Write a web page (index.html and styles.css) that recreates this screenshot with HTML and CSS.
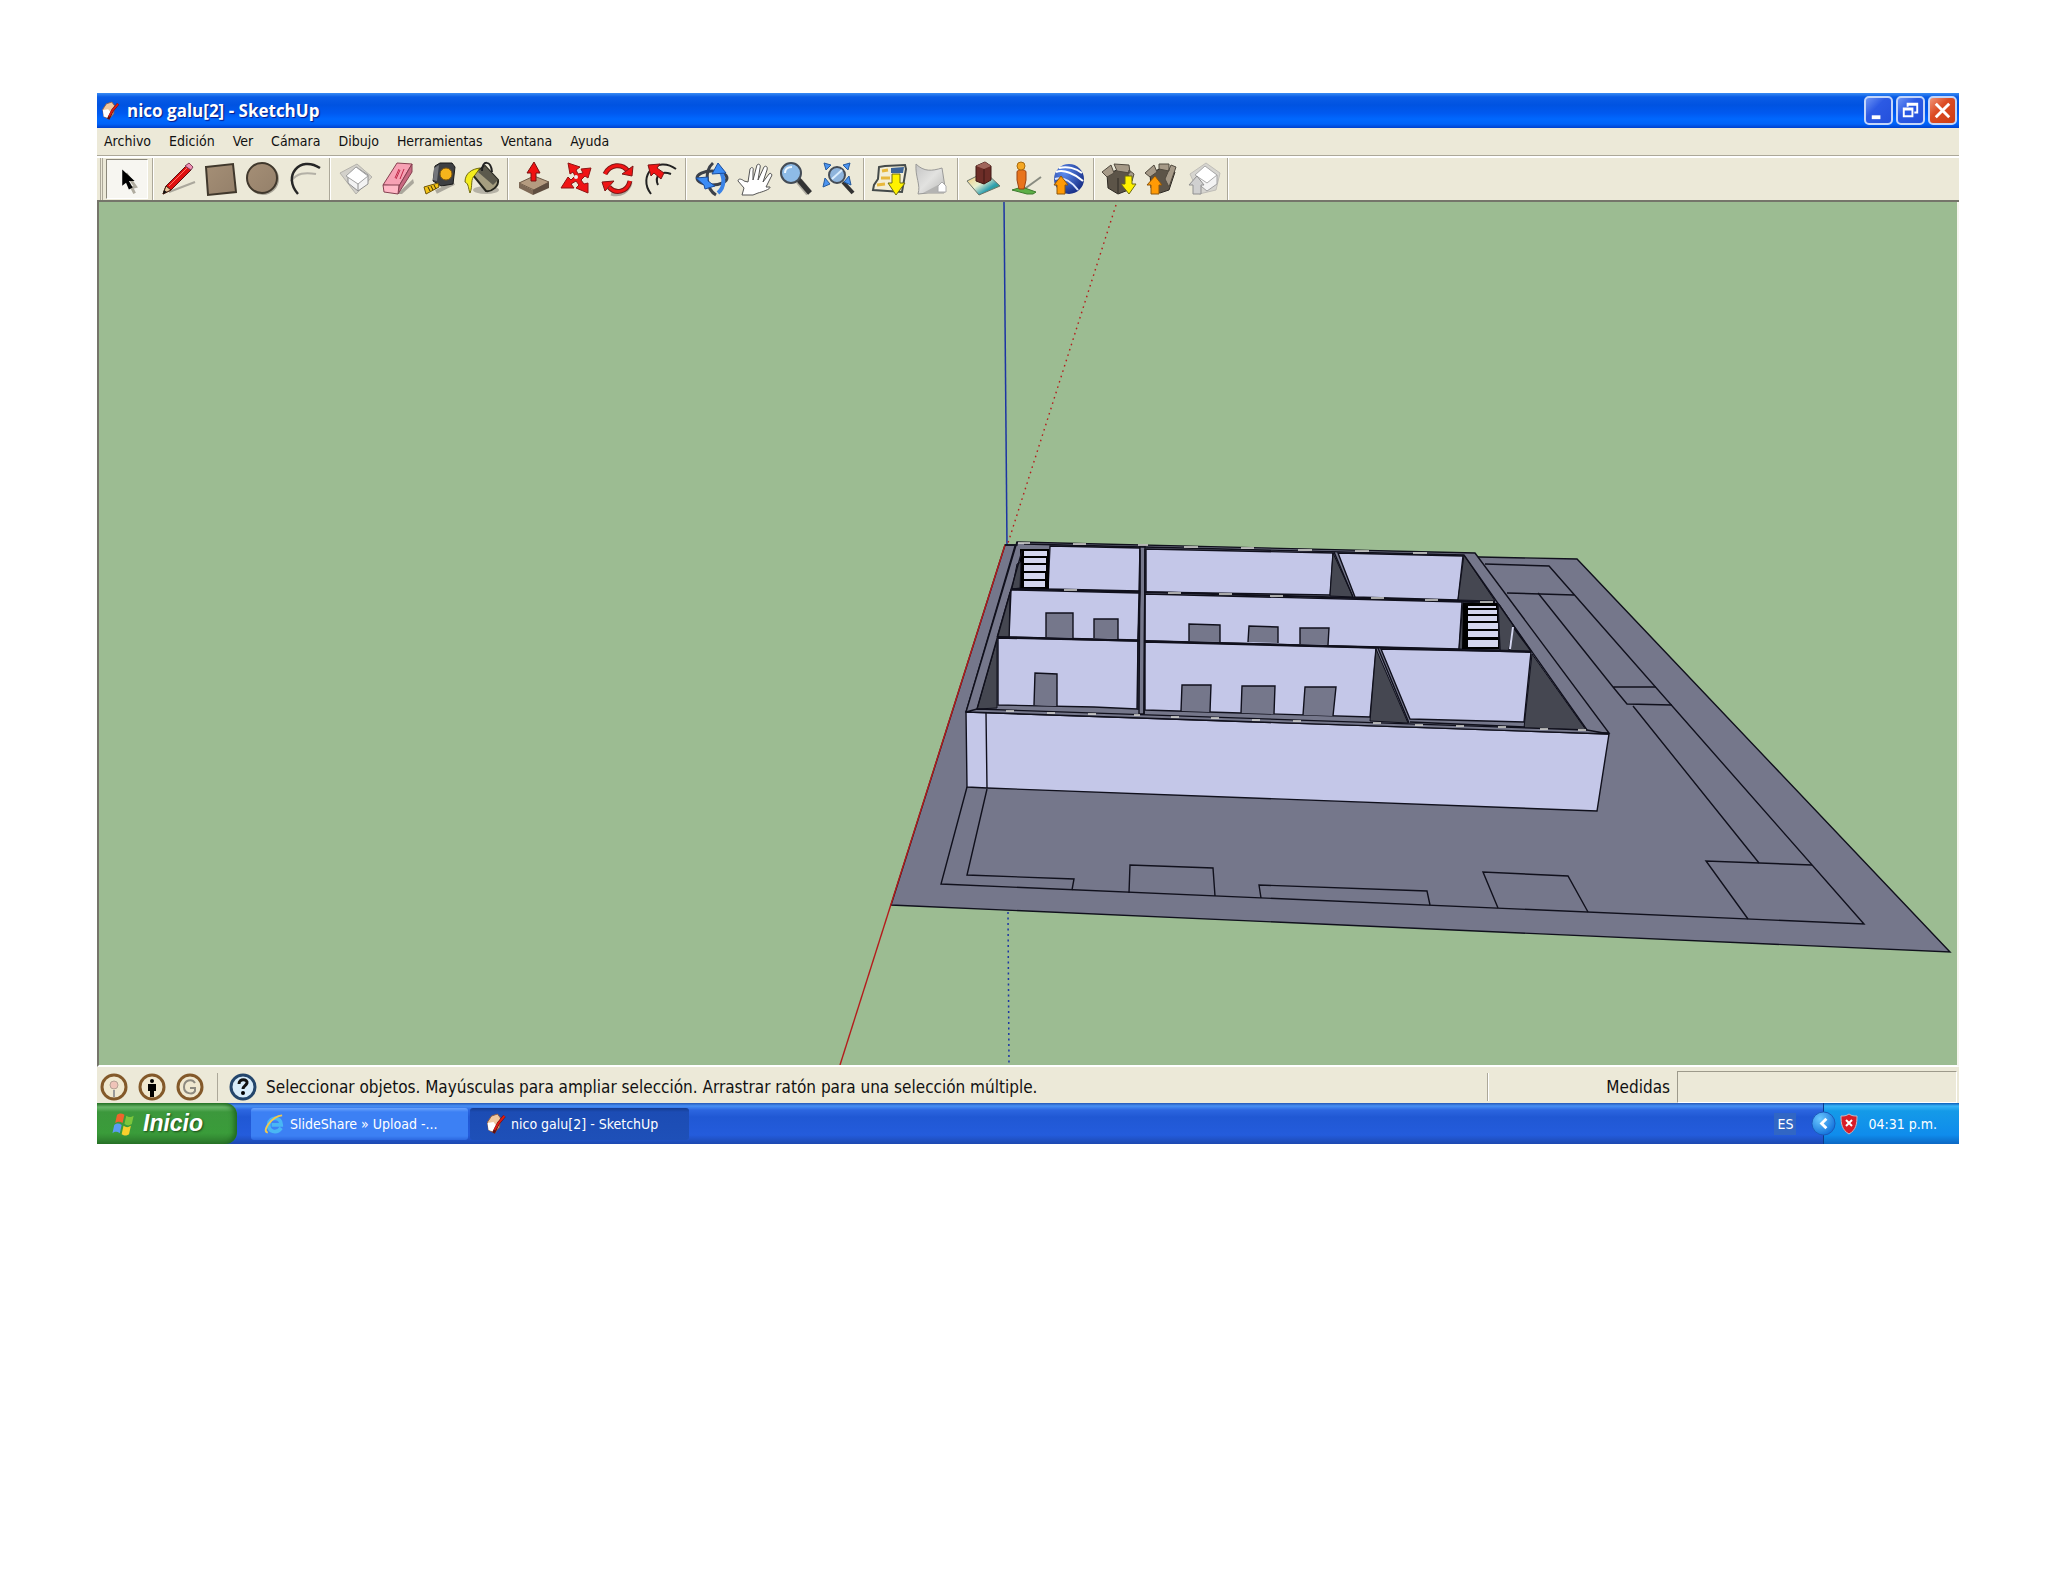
FILE: index.html
```
<!DOCTYPE html>
<html lang="es">
<head>
  <title>nico galu[2] - SketchUp</title>
  <meta charset="utf-8">
  <meta name="viewport" content="width=device-width, initial-scale=1">
  <link rel="stylesheet" href="styles.css">
</head>
<body>
  <svg class="defs" aria-hidden="true">
    <defs>
      <symbol id="app-icon" viewBox="0 0 20 22">
        <path d="m2 9 4-6 6-2 3 4-1 9-5 6-6-3z" fill="#f0c8a0" stroke="#8c5c48"/>
        <path d="m2 10 6-1 3 4-2 6-6-2z" fill="#fff"/>
        <path d="m19 3-6 7-5 10" fill="none" stroke="#601010" stroke-width="3"/>
        <path d="m19 3-6 7-4 7" fill="none" stroke="#dc1c14" stroke-width="2"/>
      </symbol>
      <linearGradient id="tan" x1="0" y1="0" x2="1" y2="1">
        <stop offset="0" stop-color="#a58f76"/>
        <stop offset="1" stop-color="#94806a"/>
      </linearGradient>
      <linearGradient id="land" x1="0" y1="0" x2="1" y2="1">
        <stop offset="0" stop-color="#f6c66a"/>
        <stop offset=".45" stop-color="#e8efd0"/>
        <stop offset=".7" stop-color="#2d9fb0"/>
        <stop offset="1" stop-color="#3f9c38"/>
      </linearGradient>
      <linearGradient id="terrain" x1="0" y1="0" x2="1" y2="1">
        <stop offset="0" stop-color="#c4c4c4"/>
        <stop offset=".5" stop-color="#e2e2e0"/>
        <stop offset="1" stop-color="#b8b8b6"/>
      </linearGradient>
      <radialGradient id="globe" cx=".35" cy=".3" r=".8">
        <stop offset="0" stop-color="#5c8cf0"/>
        <stop offset="1" stop-color="#12277e"/>
      </radialGradient>
      <radialGradient id="blue-ball" cx=".35" cy=".3" r=".8">
        <stop offset="0" stop-color="#6cc8ff"/>
        <stop offset="1" stop-color="#0a6ad8"/>
      </radialGradient>
    </defs>
  </svg>

  <main class="window">
    <header class="titlebar">
      <svg class="app-icon"><use href="#app-icon"/></svg>
      <h1 class="title">nico galu[2] - SketchUp</h1>
      <div class="window-controls">
        <button class="control" type="button" aria-label="Minimizar">
          <svg viewBox="0 0 26 26"><path d="M6 18h9v4H6z" fill="#fff"/></svg>
        </button>
        <button class="control" type="button" aria-label="Restaurar">
          <svg viewBox="0 0 26 26"><path d="M10 9V6h10v9h-3M10 7h10" fill="none" stroke="#fff" stroke-width="2"/><path d="M6 11h9v8H6zM6 12h9" fill="none" stroke="#fff" stroke-width="2"/></svg>
        </button>
        <button class="control control-close" type="button" aria-label="Cerrar">
          <svg viewBox="0 0 26 26"><path d="m6 6 14 14M20 6 6 20" stroke="#fff" stroke-width="3"/></svg>
        </button>
      </div>
    </header>

    <nav class="menu">
      <button type="button">Archivo</button>
      <button type="button">Edición</button>
      <button type="button">Ver</button>
      <button type="button">Cámara</button>
      <button type="button">Dibujo</button>
      <button type="button">Herramientas</button>
      <button type="button">Ventana</button>
      <button type="button">Ayuda</button>
    </nav>

    <div class="toolbar">
      <div class="tools tools-select">
        <button class="active" type="button" aria-label="Seleccionar">
          <svg viewBox="0 0 42 40"><path d="m20 14 10 14-4 1 3 6" fill="none" stroke="#b0aca0" stroke-width="3"/><path d="M16 10v17l4-3 3 7 4-2-4-7h6z"/></svg>
        </button>
      </div>
      <div class="tools">
        <button type="button" aria-label="Línea">
          <svg viewBox="0 0 42 40"><path d="m12 33 26-10" stroke="#aaa79c" stroke-width="2"/><path d="M6 35 9 27 29 7l5 4-20 20z" fill="#e01010" stroke="#5a1010"/><path d="m6 35 3-8 5 4z" fill="#e9c79c" stroke="#402010"/><path d="m6 35 1-4 3 2z" fill="#111"/><path d="m28 7 4-3 4 4-2 3z" fill="#f090b4" stroke="#804058"/><path d="m12 27 18-18" stroke="#ff7464"/></svg>
        </button>
        <button type="button" aria-label="Rectángulo">
          <svg viewBox="0 0 42 40"><path d="m7 8 27-3 3 28-28 3z" fill="url(#tan)" stroke="#40382c" stroke-width="2"/></svg>
        </button>
        <button type="button" aria-label="Círculo">
          <svg viewBox="0 0 42 40"><circle cx="22" cy="20" r="15" fill="none" stroke="#a9a598" stroke-width="2"/><circle cx="21" cy="19" r="15" fill="url(#tan)" stroke="#40382c" stroke-width="2"/></svg>
        </button>
        <button type="button" aria-label="Arco">
          <svg viewBox="0 0 42 40"><path d="M8 22c6-8 14-9 25-7" fill="none" stroke="#b3b0a6" stroke-width="2"/><path d="M15 35C-1 17 17-4 37 9" fill="none" stroke="#262626" stroke-width="2.5"/></svg>
        </button>
      </div>
      <div class="tools">
        <button type="button" aria-label="Crear componente">
          <svg viewBox="0 0 42 40"><path d="m5 14 17-9 15 13-16 17z" fill="#d3d1cb" stroke="#b4b2ab"/><path d="m13 16 8-8 12 8v9l-10 7-10-8z" fill="#f3f3f3" stroke="#8e8e8e"/><path d="m11 17 10-9 12 9-10 8z" fill="#fff" stroke="#a0a0a0"/><path d="M23 25v7" stroke="#8e8e8e"/></svg>
        </button>
        <button type="button" aria-label="Borrar">
          <svg viewBox="0 0 42 40"><path d="m20 35 16-15 1 4-12 11z" fill="#aaa79c"/><path d="m6 26 14-22 15 1-13 22z" fill="#f7a1b4" stroke="#854050"/><path d="m35 5 0 8-14 22 1-8z" fill="#c86880" stroke="#854050"/><path d="M6 26h16l-1 9-14-2z" fill="#ffb8c6" stroke="#854050"/><path d="m18 19 4-9m1 1-4 9m4 0 4-10" stroke="#c02848" fill="none"/></svg>
        </button>
        <button type="button" aria-label="Medir">
          <svg viewBox="0 0 42 40"><path d="m17 33 18-9" stroke="#aaa79c" stroke-width="4"/><path d="m16 7 5-3h12l3 4-2 17-12 2-8-5z" fill="#3d3f42" stroke="#191919"/><path d="m15 9 5-3-2 16-4-1z" fill="#74767a"/><circle cx="27" cy="15" r="6" fill="#f6b41c" stroke="#80580c"/><path d="m5 28 14-4 1 4-13 7z" fill="#f2c216" stroke="#6d5306"/><path d="m9 28 2 4m1-5 2 4m1-5 2 4" stroke="#3b2e08"/></svg>
        </button>
        <button type="button" aria-label="Pintar">
          <svg viewBox="0 0 42 40"><ellipse cx="25" cy="31" rx="13" ry="4" fill="#b5b2a6"/><path d="M11 15 24 7l13 14c1 6-6 12-12 11z" fill="#a59e80" stroke="#26261e" stroke-width="2"/><path d="m24 7 13 14-5 5-15-13z" fill="#5b594c"/><path d="M21 12c0-11 9-11 10 1" fill="none" stroke="#222" stroke-width="2"/><path d="M4 23c0-9 7-13 15-14l-5 7c-5 4-2 11-5 18-2-5-1-9-5-11z" fill="#f4ec1e" stroke="#6e6810"/></svg>
        </button>
      </div>
      <div class="tools">
        <button type="button" aria-label="Empujar o tirar">
          <svg viewBox="0 0 42 40"><path d="m6 24 15-7 15 6-15 8z" fill="#b49b80" stroke="#6f5a47"/><path d="M6 24v5l14 7v-5z" fill="#7e6956"/><path d="M20 31v5l16-7v-6z" fill="#5f4e40"/><path d="M18 22V14h-4l7-11 6 11h-4v8z" fill="#f01010" stroke="#7a1010"/></svg>
        </button>
        <button type="button" aria-label="Mover">
          <svg viewBox="0 0 42 40"><path d="m13 4 12 4-4 3 2 4 5-1-2-4 10-1-3 10-3-2-4 4 3 4 4-1v10l-12-5 3-3-3-4-5 3 3 4-13 0 7-11 3 3 4-4-2-4-3 2z" fill="#f01414" stroke="#901414"/><circle cx="21" cy="18" r="2" fill="#eee"/></svg>
        </button>
        <button type="button" aria-label="Girar">
          <svg viewBox="0 0 42 40"><path d="M14 35c10 3 18-3 20-11" fill="none" stroke="#aeaba0" stroke-width="3"/><path d="M8 15c5-10 17-11 23-3" fill="none" stroke="#7b1717" stroke-width="5"/><path d="M8 15c5-10 17-11 23-3" fill="none" stroke="#f01414" stroke-width="3"/><path d="m25 15 11-8-1 10z" fill="#f01414" stroke="#7b1717"/><path d="M33 22c-3 12-15 13-21 6" fill="none" stroke="#7b1717" stroke-width="5"/><path d="M33 22c-3 12-15 13-21 6" fill="none" stroke="#f01414" stroke-width="3"/><path d="m5 23 12-1-9 10z" fill="#f01414" stroke="#7b1717"/></svg>
        </button>
        <button type="button" aria-label="Equidistancia">
          <svg viewBox="0 0 42 40"><path d="M12 35C-2 17 18-4 37 10M19 26c-4-9 3-15 13-11" fill="none" stroke="#222" stroke-width="2"/><path d="m9 6 12-1-3 4 7 5-3 6-7-6-3 3z" fill="#f01414" stroke="#7b1717"/></svg>
        </button>
      </div>
      <div class="tools">
        <button type="button" aria-label="Orbitar">
          <svg viewBox="0 0 42 40"><ellipse cx="21" cy="19" rx="15" ry="7" fill="none" stroke="#3c414a" stroke-width="3"/><path d="M22 4c-9 8-7 26 3 32" fill="none" stroke="#3c414a" stroke-width="3"/><path d="M28 10c6 8 6 18-1 24" fill="none" stroke="#3b83e6" stroke-width="4"/><path d="m21 15 6-11 8 10z" fill="#3b8cf5" stroke="#1a4c9c"/><path d="m5 19 12-1v4l7 5-10 3-1-4z" fill="#3b8cf5" stroke="#1a4c9c"/></svg>
        </button>
        <button type="button" aria-label="Desplazar">
          <svg viewBox="0 0 42 40"><path d="M9 36 11 29 5 22c0-3 4-2 6 0l4 1 2-13c2-3 4-1 3 2v9l4-15c2-2 4 0 3 3l-2 12 6-13c2-2 4 0 3 3l-4 12 6-8c2-2 4 1 2 3l-5 10h4c1 2-8 5-12 6l-5 2z" fill="#fff" stroke="#555"/></svg>
        </button>
        <button type="button" aria-label="Zoom">
          <svg viewBox="0 0 42 40"><path d="m24 22 10 12" stroke="#b0ada2" stroke-width="7"/><path d="m23 20 12 14" stroke="#333" stroke-width="5"/><circle cx="16" cy="14" r="10" fill="#8ebbe6" stroke="#444c56" stroke-width="2"/><path d="M10 14c0-4 3-6 7-6" fill="none" stroke="#eef7ff" stroke-width="2"/></svg>
        </button>
        <button type="button" aria-label="Ver modelo">
          <svg viewBox="0 0 42 40"><path d="m26 23 10 11" stroke="#333" stroke-width="4"/><circle cx="20" cy="16" r="8" fill="#8eb4dc" stroke="#444c56" stroke-width="2"/><path d="m15 20 10-9" stroke="#d9ecfd" stroke-width="2"/><path d="m7 4 7 2-5 5zM33 4l-7 2 5 5zM6 28l2-9 5 6zM34 26l-7-3 5-6z" fill="#4b94f0" stroke="#265a9c"/></svg>
        </button>
      </div>
      <div class="tools">
        <button type="button" aria-label="Obtener vista actual">
          <svg viewBox="0 0 42 40"><path d="m10 8 6-1 20-1 1 4-4 23-29-2 1-5 4-6z" fill="#f3eed6" stroke="#444a4a" stroke-width="2"/><path d="m22 9 13-1-1 6-12 0z" fill="#3c6498"/><path d="m13 12 6-1m-7 8h9M8 26l8-1" stroke="#e8b83c" stroke-width="3"/><path d="M23 15h8v9h5l-9 12-8-12h4z" fill="#fff200" stroke="#6d6a14"/></svg>
        </button>
        <button type="button" aria-label="Activar terreno">
          <svg viewBox="0 0 42 40"><path d="M5 5c8 8 16 7 26 4l3 19-1 6H17L7 35C10 26 4 18 5 5z" fill="url(#terrain)" stroke="#9a9a98"/><path d="m12 34 15-8 7 8z" fill="#b4b4b2"/><path d="m27 27 4-4 4 4v6h-8z" fill="#fff" stroke="#aaa"/></svg>
        </button>
      </div>
      <div class="tools">
        <button type="button" aria-label="Colocar modelos">
          <svg viewBox="0 0 42 40"><path d="m4 22 18-9 15 14-21 9z" fill="url(#land)" stroke="#6a7468"/><path d="m13 7 9-4 6 4v14l-7 4-8-3z" fill="#6d2d27" stroke="#3e1914"/><path d="m13 7 9-4 6 4-7 3z" fill="#a0655b"/><path d="M21 10v15" stroke="#3e1914"/></svg>
        </button>
        <button type="button" aria-label="Posición de cámara">
          <svg viewBox="0 0 42 40"><path d="m18 31 18-13" stroke="#888b80" stroke-width="2"/><path d="m7 31 10-3 14 5-3 2h-6z" fill="#5caf46" stroke="#3c7a2e"/><path d="M12 13c0-3 9-3 9 0v8l-2 9h-5l-2-9z" fill="#e8741c" stroke="#9a4210"/><circle cx="16" cy="7" r="4" fill="#f5a823" stroke="#a86b10"/></svg>
        </button>
        <button type="button" aria-label="Google Earth">
          <svg viewBox="0 0 42 40"><circle cx="22" cy="20" r="15" fill="url(#globe)"/><path d="M9 13c8-3 19 2 27 9M12 9c8-2 17 0 23 5" fill="none" stroke="#fff" stroke-width="2"/><path d="M8 20c9-3 18 4 23 11" fill="none" stroke="#dce6ff" stroke-width="2"/><path d="M10 35V26H7l7-9 7 9h-3v9z" fill="#ff9a05" stroke="#8c560c"/></svg>
        </button>
      </div>
      <div class="tools tools-last">
        <button type="button" aria-label="Obtener modelos">
          <svg viewBox="0 0 42 40"><path d="m8 15 10-4 13 3 1 16-13 5-10-6z" fill="#5c5448" stroke="#2e2a24"/><path d="m3 13 9-7 3 8-7 4zM15 5l15 1 1 8-13-2zM30 11l5 4-2 7-4-6z" fill="#a69a88" stroke="#514a3f"/><path d="M19 19v15" stroke="#2e2a24"/><path d="M26 17h7v8h4l-7 10-8-10h4z" fill="#fff200" stroke="#6d6a14"/></svg>
        </button>
        <button type="button" aria-label="Compartir modelo">
          <svg viewBox="0 0 42 40"><path d="m9 14 12-5 13 4-6 18-9 3-9-5z" fill="#5c5448" stroke="#2e2a24"/><path d="m4 14 9-8 3 7-7 5zM18 5l10 0 0 7-10-2zM30 6l5 2-7 20-4-8z" fill="#a69a88" stroke="#514a3f"/><path d="M10 35V26H6l8-9 7 9h-3v9z" fill="#ff9a05" stroke="#8c560c"/></svg>
        </button>
        <button type="button" aria-label="Compartir componente">
          <svg viewBox="0 0 42 40"><path d="m7 15 16-11 14 10-4 17-17 4z" fill="#d6d5d0" stroke="#c0beb8"/><path d="m14 16 8-8 12 8v9l-10 7-10-8z" fill="#f3f3f3" stroke="#a0a0a0"/><path d="m12 16 10-9 12 9-10 8z" fill="#fff" stroke="#aaa"/><path d="M10 35V26H6l8-9 7 9h-3v9z" fill="#d0d0d0" stroke="#909090"/></svg>
        </button>
      </div>
    </div>

    <section class="canvas">
      <svg class="model" viewBox="99 202 1858 863" role="img" aria-label="Modelo">
        <!-- axes behind the model -->
        <path class="axis-blue" d="M1004 202 1007 545"/>
        <path class="axis-red dotted-red" d="M1116 205 1008 543"/>
        <path class="axis-blue dotted-blue" d="M1008 912 1009 1065"/>

        <!-- plot -->
        <path class="ground" d="M1005 545 1015 545 1480 557 1577 559 1950 952 891 905z"/>
        <path class="edge" d="M1015 546 966 712M967 787 941 884 1864 924 1549 566 1485 564"/>
        <path class="edge" d="M987 789 967 875 1074 879 1072 890M1129 893 1130 865 1213 868 1215 896M1261 898 1259 885 1427 891 1430 905"/>
        <path class="edge" d="M1498 908 1483 872 1568 876 1588 912M1748 919 1706 861 1812 865M1507 593 1574 595"/>
        <path class="edge" d="M1538 593 1613 687 1656 687M1613 687 1627 704 1672 705M1633 706 1759 863"/>
        <path class="axis-red" d="M1005 545 840 1065"/>

        <!-- wall tops -->
        <path class="wall-top" d="M1017 542 1475 553 1609 733 966 712z"/>

        <!-- back row -->
        <path class="wall" d="M1050 546 1140 548 1139 591 1048 589z"/>
        <path class="wall" d="M1146 549 1333 553 1330 595 1146 592z"/>
        <path class="shade" d="M1333 553 1330 596 1353 597z"/>
        <path class="wall" d="M1338 553 1463 556 1458 600 1355 597z"/>
        <path class="shade" d="M1464 555 1458 600 1495 601z"/>
        <path class="edge" d="M1334 552 1353 597"/>
        <path d="M1020 549h29v41h-29z"/>
        <path class="step" d="M1024 551h23v5h-23zM1024 558h22v5h-22zM1024 565h22v6h-22zM1024 573h21v6h-21zM1024 581h21v6h-21z"/>
        <path class="shade" d="M1017 564 1021 562 1020 588 1012 589z"/>

        <!-- middle row -->
        <path class="wall" d="M1011 590 1139 593 1138 640 1009 637z"/>
        <path class="wall" d="M1145 594 1462 602 1459 649 1145 641z"/>
        <path class="shade" d="M1010 592 1009 637 997 637z"/>
        <path class="opening" d="M1046 637V613H1073V638M1094 638V619H1118V639M1189 641V624L1220 625V642M1248 642 1249 626 1278 627V643M1300 644V628H1329L1328 645"/>
        <path class="shade" d="M1463 602 1499 604 1531 651 1459 649z"/>
        <path d="M1463 603h35l1 46h-37z"/>
        <path class="step" d="M1468 606h28v2h-28zM1468 610h29v4h-29zM1468 616h29v5h-29zM1468 623h30v6h-30zM1468 631h30v6h-30zM1468 640h30v7h-30z"/>
        <path class="edge" d="M1509 650 1513 627 1531 651M1498 604 1500 650"/>
        <path class="step" d="m1512 627 2 0-3 22h-2z"/>

        <!-- front row -->
        <path class="wall" d="M998 638 1138 641 1137 709 1094 707 998 705z"/>
        <path class="wall" d="M1145 642 1376 648 1370 717 1145 710z"/>
        <path class="shade" d="M997 640V708L977 709z"/>
        <path class="opening" d="M1034 705 1035 673 1057 674V706M1181 711 1182 685 1211 685 1210 712M1241 713 1242 686 1275 686 1274 714M1303 715 1305 687 1336 687 1333 716"/>
        <path class="shade" d="M1376 649 1370 721 1408 723z"/>
        <path class="wall" d="M1381 649 1531 652 1524 722 1410 719z"/>
        <path class="shade" d="M1532 654 1524 728 1586 730z"/>
        <path class="edge" d="M1378 648 1409 723M1410 722 1525 727"/>

        <!-- partition tops -->
        <path class="partition" d="M1012 589 1145 592 1495 602"/>
        <path class="partition" d="M997 637 1145 641 1531 652"/>
        <path class="highlight" d="M1064 590h13M1168 593h13M1219 594h13M1270 596h13M1371 598h13M1425 600h13M1480 602h13"/>
        <path class="wall-top" d="M1140 546h5l-1 168h-5z"/>
        <path class="edge" d="M1140 550V592L1138 640 1138 710M1145 549 1144 714"/>

        <!-- outer wall -->
        <path class="wall" d="M966 712 1609 734 1597 811 987 788 967 787z"/>
        <path class="wall-top" d="M977 709 1587 730 1609 734 966 712z"/>
        <path class="edge" d="M986 713 987 788M1022 551 977 709M1024 544 1464 555 1587 730M1005 545h12l0-3"/>
        <path class="highlight" d="M1018 543h12M1073 544h13M1138 545h10M1184 547h14M1241 548h13M1298 550h14M1355 551h14M1413 553h14"/>
        <path class="highlight" d="M1006 711h8M1047 713h8M1088 714h8M1134 715h6M1171 717h8M1211 718h8M1252 720h8M1293 721h8M1373 723h8M1415 725h8M1456 726h8M1498 727h8M1540 729h8M1578 730h8"/>
      </svg>
    </section>

    <footer class="statusbar">
      <button class="status-icon" type="button" aria-label="Ubicación"><svg viewBox="0 0 28 28"><circle cx="14" cy="14" r="12"/><path d="M14 17v7" stroke="#999" stroke-width="2"/><circle cx="14" cy="12" r="4" fill="#efc3b8" stroke="#b5a195"/></svg></button>
      <button class="status-icon" type="button" aria-label="Créditos"><svg viewBox="0 0 28 28"><circle cx="14" cy="14" r="12"/><circle cx="14" cy="8" r="2"/><path d="M10 11h8v7h-2v6h-4v-6h-2z"/></svg></button>
      <button class="status-icon" type="button" aria-label="Google"><svg viewBox="0 0 28 28"><circle cx="14" cy="14" r="12"/><path d="M19 10c-3-5-11-3-11 4s9 8 11 4v-3h-5" fill="none" stroke="#8e8a80" stroke-width="2"/></svg></button>
      <span class="status-divider"></span>
      <button class="status-icon status-help" type="button" aria-label="Ayuda"><svg viewBox="0 0 28 28"><circle cx="14" cy="14" r="12"/><path d="M10 11c0-6 9-5 8-1-1 3-4 3-4 6" fill="none" stroke="#111" stroke-width="3"/><circle cx="14" cy="20" r="2"/></svg></button>
      <span class="hint">Seleccionar objetos. Mayúsculas para ampliar selección. Arrastrar ratón para una selección múltiple.</span>
      <label class="measure-label" for="measure">Medidas</label>
      <input class="measure" id="measure" type="text">
    </footer>

    <div class="taskbar">
      <button class="start" type="button">
        <svg viewBox="0 0 26 26"><path d="M6 3c3-2 5-2 8 0l-2 9c-3-2-5-2-8 0z" fill="#f0642c"/><path d="M16 4c3 2 5 2 8 0l-2 9c-3 2-5 2-8 0z" fill="#7cc63c"/><path d="M3 14c3-2 5-2 8 0l-2 9c-3-2-5-2-8 0z" fill="#5a9cf4"/><path d="M13 15c3 2 5 2 8 0l-2 9c-3 2-5 2-8 0z" fill="#f8d02c"/></svg>
        Inicio
      </button>
      <button class="task" type="button">
        <svg viewBox="0 0 22 22"><path d="M18 15c-5 7-14 4-13-4s13-8 13 1H8" fill="none" stroke="#49b7f4" stroke-width="4"/><path d="M4 20c-7-1 4-17 15-18" fill="none" stroke="#f0c850" stroke-width="2"/></svg>
        SlideShare » Upload -...
      </button>
      <button class="task task-active" type="button">
        <svg><use href="#app-icon"/></svg>
        nico galu[2] - SketchUp
      </button>
      <span class="language">ES</span>
      <div class="tray">
        <button class="tray-toggle" type="button" aria-label="Mostrar iconos ocultos">
          <svg viewBox="0 0 26 26"><circle cx="13" cy="13" r="12" fill="url(#blue-ball)" stroke="#1c58b8"/><path d="m16 8-5 5 5 5" fill="none" stroke="#fff" stroke-width="3"/></svg>
        </button>
        <svg class="shield" viewBox="0 0 18 22"><path d="M9 1c3 2 5 2 8 2 0 8-1 14-8 18C2 17 1 11 1 3c3 0 5 0 8-2z" fill="#d81c28" stroke="#c8b8c0"/><path d="m6 7 6 6m0-6-6 6" stroke="#fff" stroke-width="2"/></svg>
        <time>04:31 p.m.</time>
      </div>
    </div>
  </main>
</body>
</html>
```
FILE: styles.css
```
body {
  background-color: #ffffff;
  color: #111111;
  font-family: "DejaVu Sans Condensed", "DejaVu Sans", sans-serif;
  font-size: 14px;
  margin: 0;
}

button {
  background: none;
  border: 0;
  color: inherit;
  font: inherit;
  padding: 0;
}

svg {
  display: block;
}

.defs {
  height: 0;
  width: 0;
}

.window {
  background-color: #ece9d8;
  margin: 93px 89px 0 97px;
}

/* Title bar */

.titlebar {
  align-items: center;
  background: linear-gradient(#3a8cf4 0, #0a5ce6 4px, #0053e1 12px, #0059f0 20px, #0068ff 26px, #0062f8 31px, #0040cc 100%);
  display: flex;
  gap: 8px;
  height: 35px;
  padding: 0 2px 0 4px;
}

.app-icon {
  height: 22px;
  width: 18px;
}

.title {
  color: #ffffff;
  flex: 1;
  font-family: "Open Sans", sans-serif;
  font-size: 17px;
  font-weight: 700;
  line-height: 24px;
  margin: 0;
  text-shadow: 1px 1px 1px #0a1883;
}

.window-controls {
  display: flex;
  gap: 3px;
}

.control {
  background: linear-gradient(135deg, #6c93f4, #2c5ae4 40%, #2450dc);
  border: 2px solid #c4d6fa;
  border-radius: 5px;
  box-sizing: border-box;
  height: 29px;
  width: 29px;
}

.control-close {
  background: linear-gradient(135deg, #f09478, #dc4c24 40%, #cc3c14);
}

/* Menu */

.menu {
  border-bottom: 1px solid #aca899;
  display: flex;
  gap: 18px;
  height: 27px;
  padding-left: 7px;
}

.menu button {
  line-height: 24px;
  padding-bottom: 2px;
}

/* Toolbar */

.toolbar {
  border-bottom: 2px solid #75756a;
  border-top: 2px solid #ffffff;
  display: flex;
  height: 42px;
  padding-left: 3px;
}

.tools {
  border-right: 1px solid #aca899;
  box-shadow: 1px 0 #ffffff;
  display: flex;
  margin-right: 5px;
  padding-right: 4px;
}

.tools button {
  box-sizing: border-box;
  height: 40px;
  margin-top: 1px;
  width: 42px;
}

.tools-select {
  border-left: 3px double #aca899;
  margin-right: 4px;
  padding-left: 3px;
}

.tools .active {
  background-color: #f7f6f1;
  border: 1px solid #ffffff;
  border-left-color: #8b887b;
  border-top-color: #8b887b;
}

.tools-last {
  padding-right: 2px;
}

/* Drawing area */

.canvas {
  background-color: #9cbc92;
  border-bottom: 2px solid #ffffff;
  border-left: 2px solid #75756a;
  border-right: 2px solid #f6f5ee;
}

.model {
  height: auto;
  width: 100%;
}

.ground,
.wall-top,
.opening {
  fill: #75778b;
  stroke: #10101c;
  stroke-width: 1.4;
}

.wall {
  fill: #c4c7e8;
  stroke: #10101c;
  stroke-width: 1.4;
}

.shade {
  fill: #454751;
  stroke: #10101c;
}

.step {
  fill: #d4d6ee;
}

.edge,
.partition {
  fill: none;
  stroke: #10101c;
  stroke-width: 1.4;
}

.partition {
  stroke-width: 2;
}

.highlight {
  stroke: #dcdcd8;
  stroke-width: 1.6;
}

.axis-blue {
  fill: none;
  stroke: #1c34a4;
  stroke-width: 1.5;
}

.axis-red {
  fill: none;
  stroke: #b41c1c;
  stroke-width: 1.4;
}

.dotted-red {
  stroke-dasharray: 1.6 4;
}

.dotted-blue {
  stroke-dasharray: 2 3.5;
}

/* Status bar */

.statusbar {
  align-items: center;
  box-sizing: border-box;
  display: flex;
  font-size: 17px;
  height: 36px;
  padding: 3px 2px 0 3px;
}

.status-icon {
  margin-right: 10px;
}

.status-icon svg {
  height: 28px;
  width: 28px;
}

.status-icon svg > circle:first-child {
  fill: #f0e8d0;
  stroke: #83592a;
  stroke-width: 3;
}

.status-help svg > circle:first-child {
  fill: #d8ecfa;
  stroke: #24466c;
}

.status-divider {
  border-left: 1px solid #aca899;
  height: 28px;
  margin: 0 11px 0 3px;
}

.status-help {
  margin-right: 9px;
}

.hint {
  flex: 1;
}

.measure-label {
  border-left: 1px solid #aca899;
  box-shadow: inset 1px 0 #ffffff;
  box-sizing: border-box;
  line-height: 28px;
  padding-right: 7px;
  text-align: right;
  width: 190px;
}

.measure {
  background-color: #ece9d8;
  border: 1px solid #ffffff;
  border-left-color: #9d9a8b;
  border-top-color: #9d9a8b;
  box-sizing: border-box;
  height: 32px;
  width: 280px;
}

/* Taskbar */

.taskbar {
  align-items: stretch;
  background: linear-gradient(#2458b8 0, #4890f4 3px, #2c66e0 7px, #2058d4 14px, #245cdc 32px, #1c48b0 100%);
  color: #ffffff;
  display: flex;
  gap: 2px;
  height: 41px;
}

.start {
  align-items: center;
  background: linear-gradient(#2c7c2c 0, #6cb86c 4px, #3c983c 9px, #3a9c3a 30px, #2c782c 100%);
  border-radius: 0 12px 12px 0;
  box-shadow: inset -3px 0 5px #206820;
  display: flex;
  font-family: "Liberation Sans", sans-serif;
  font-size: 23px;
  font-style: italic;
  font-weight: 700;
  gap: 7px;
  margin-right: 12px;
  padding-left: 14px;
  text-shadow: 1px 1px 2px #184818;
  width: 140px;
}

.start svg {
  height: 24px;
  width: 25px;
}

.task {
  align-items: center;
  background: linear-gradient(#6ca4fc 0, #3c80f4 4px, #3c80f4 28px, #2c68e0 100%);
  border-radius: 3px;
  display: flex;
  gap: 5px;
  margin: 5px 0 4px;
  padding-left: 13px;
  width: 217px;
}

.task svg {
  height: 22px;
  width: 21px;
}

.task-active {
  background: linear-gradient(#153c90 0, #1c4cb4 4px, #1e50b8 100%);
  padding-left: 15px;
  width: 219px;
}

.language {
  align-self: center;
  background-color: #3166c4;
  line-height: 22px;
  margin-left: auto;
  margin-right: 25px;
  padding: 0 3px;
}

.tray {
  align-items: center;
  background: linear-gradient(#0c5cb8 0, #38b4f8 3px, #149ae8 8px, #0f8cec 32px, #0c68c4 100%);
  border-left: 1px solid #0c3c8c;
  display: flex;
  gap: 10px;
  padding: 0 22px 0 16px;
  position: relative;
}

.tray-toggle {
  left: -13px;
  position: absolute;
  top: 8px;
}

.tray-toggle svg {
  height: 25px;
  width: 25px;
}

.shield {
  height: 22px;
  width: 18px;
}
```
